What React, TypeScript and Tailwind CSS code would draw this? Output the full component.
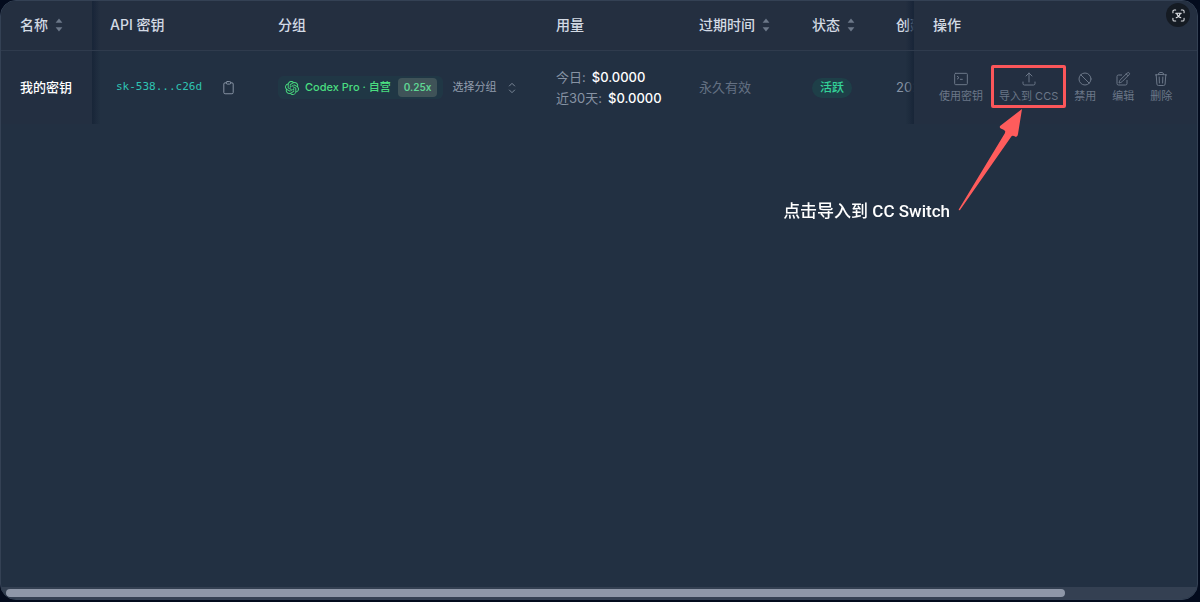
import type { ReactNode } from "react";

const COLUMNS = [
  { label: "名称", width: "w-[91px]", sortable: true },
  { label: "API 密钥", width: "w-[168px]" },
  { label: "分组", width: "w-[278px]" },
  { label: "用量", width: "w-[143px]" },
  { label: "过期时间", width: "w-[113px]", sortable: true },
  { label: "状态", width: "w-[84px]", sortable: true },
  { label: "创建", width: "w-[175px]" },
  { label: "操作", width: "w-[283px]" },
];

function SortIcon() {
  return (
    <svg viewBox="0 0 8 14" className="h-[14px] w-2 fill-[#6c7889]" aria-hidden="true">
      <path d="M4 0.5 7.4 4.8H0.6Z" />
      <path d="M4 13.5 7.4 9.2H0.6Z" />
    </svg>
  );
}

function StrokeIcon({ children, className }: { children: ReactNode; className: string }) {
  return (
    <svg
      viewBox="0 0 24 24"
      fill="none"
      stroke="currentColor"
      strokeWidth="1.5"
      strokeLinecap="round"
      strokeLinejoin="round"
      className={className}
      aria-hidden="true"
    >
      {children}
    </svg>
  );
}

function OpenAIIcon() {
  return (
    <svg viewBox="0 0 24 24" className="size-[14px] shrink-0 fill-current" aria-hidden="true">
      <path d="M22.2819 9.8211a5.9847 5.9847 0 0 0-.5157-4.9108 6.0462 6.0462 0 0 0-6.5098-2.9A6.0651 6.0651 0 0 0 4.9807 4.1818a5.9847 5.9847 0 0 0-3.9977 2.9 6.0462 6.0462 0 0 0 .7427 7.0966 5.98 5.98 0 0 0 .511 4.9107 6.051 6.051 0 0 0 6.5146 2.9001A5.9847 5.9847 0 0 0 13.2599 24a6.0557 6.0557 0 0 0 5.7718-4.2058 5.9894 5.9894 0 0 0 3.9977-2.9001 6.0557 6.0557 0 0 0-.7475-7.073zm-9.022 12.6081a4.4755 4.4755 0 0 1-2.8764-1.0408l.1419-.0804 4.7783-2.7582a.7948.7948 0 0 0 .3927-.6813v-6.7369l2.02 1.1686a.071.071 0 0 1 .038.052v5.5826a4.504 4.504 0 0 1-4.4945 4.4944zm-9.6607-4.1254a4.4708 4.4708 0 0 1-.5346-3.0137l.142.0852 4.783 2.7582a.7712.7712 0 0 0 .7806 0l5.8428-3.3685v2.3324a.0804.0804 0 0 1-.0332.0615L9.74 19.9502a4.4992 4.4992 0 0 1-6.1408-1.6464zM2.3408 7.8956a4.485 4.485 0 0 1 2.3655-1.9728V11.6a.7664.7664 0 0 0 .3879.6765l5.8144 3.3543-2.0201 1.1685a.0757.0757 0 0 1-.071 0l-4.8303-2.7865A4.504 4.504 0 0 1 2.3408 7.872zm16.5963 3.8558L13.1038 8.364 15.1192 7.2a.0757.0757 0 0 1 .071 0l4.8303 2.7913a4.4944 4.4944 0 0 1-.6765 8.1042v-5.6772a.79.79 0 0 0-.407-.667zm2.0107-3.0231l-.142-.0852-4.7735-2.7818a.7759.7759 0 0 0-.7854 0L9.409 9.2297V6.8974a.0662.0662 0 0 1 .0284-.0615l4.8303-2.7866a4.4992 4.4992 0 0 1 6.6802 4.66zM8.3065 12.863l-2.02-1.1638a.0804.0804 0 0 1-.038-.0567V6.0742a4.4992 4.4992 0 0 1 7.3757-3.4537l-.142.0805L8.704 5.459a.7948.7948 0 0 0-.3927.6813zm1.0976-2.3654l2.602-1.4998 2.6069 1.4998v2.9994l-2.5974 1.4997-2.6067-1.4997Z" />
    </svg>
  );
}

function ActionButton({ label, marked, children }: { label: string; marked?: boolean; children: ReactNode }) {
  return (
    <button type="button" className="relative flex flex-col items-center gap-px px-[6px] whitespace-nowrap text-[#6b7788]">
      <StrokeIcon className="size-4">{children}</StrokeIcon>
      <span className="text-[11px] leading-4">{label}</span>
      {marked && <span className="absolute -inset-x-[2px] -top-[6px] -bottom-1 rounded-[2px] border-[3px] border-[#fb565a]" />}
    </button>
  );
}

function ColumnShade({ side }: { side: "left" | "right" }) {
  return side === "left" ? (
    <span className="pointer-events-none absolute inset-y-0 left-full w-2 bg-linear-to-r from-[#182538] to-transparent" />
  ) : (
    <span className="pointer-events-none absolute inset-y-0 right-full w-2 bg-linear-to-l from-[#182538] to-transparent" />
  );
}

function headerCellClass(i: number) {
  if (i === 0) return "sticky left-0 z-10 bg-[#242f40] pl-[19px]";
  if (i === COLUMNS.length - 1) return "sticky right-0 z-10 bg-[#242f40] pl-[19px]";
  return "px-[18px]";
}

function KeysTable() {
  return (
    <table className="w-full min-w-[1335px] table-fixed border-separate border-spacing-0 text-left text-[13px]">
      <thead>
        <tr className="h-[50px] bg-[#242f40]">
          {COLUMNS.map((col, i) => (
            <th
              key={col.label}
              className={`border-b border-[#2f3b4d] pb-[2px] text-sm font-medium whitespace-nowrap text-[#d3dae4] ${col.width} ${headerCellClass(i)}`}
            >
              <span className="flex items-center gap-[7px]">
                {col.label}
                {col.sortable && <SortIcon />}
              </span>
              {i === 0 && <ColumnShade side="left" />}
              {i === COLUMNS.length - 1 && <ColumnShade side="right" />}
            </th>
          ))}
        </tr>
      </thead>
      <tbody>
        <tr className="h-[73px]">
          <td className="sticky left-0 z-10 bg-[#232f41] pl-[19px] font-medium whitespace-nowrap text-white">
            我的密钥
            <ColumnShade side="left" />
          </td>
          <td className="px-[18px]">
            <div className="flex items-center gap-[19px] pl-[6px]">
              <code className="font-['DejaVu_Sans_Mono',monospace] text-[11px] text-[#2fc4b2]">sk-538...c26d</code>
              <button type="button" aria-label="复制" className="text-[#8c98a9]">
                <StrokeIcon className="size-[15px]">
                  <path d="M8.5 4.5H6.5A2 2 0 0 0 4.5 6.5V20A2 2 0 0 0 6.5 22H17.5A2 2 0 0 0 19.5 20V6.5A2 2 0 0 0 17.5 4.5H15.5" />
                  <path d="M10 2.5H14A1.5 1.5 0 0 1 15.5 4V5A1.5 1.5 0 0 1 14 6.5H10A1.5 1.5 0 0 1 8.5 5V4A1.5 1.5 0 0 1 10 2.5Z" />
                </StrokeIcon>
              </button>
            </div>
          </td>
          <td className="px-[18px]">
            <button type="button" className="flex items-center gap-[9px] whitespace-nowrap">
              <span className="flex h-[23px] items-center gap-[6px] rounded-md bg-emerald-500/5 pr-[6px] pl-[7px] text-[11px] font-medium text-[#4ade80]">
                <OpenAIIcon />
                <span className="pr-px">Codex Pro · 自营</span>
                <span className="rounded bg-[#3f5358] px-[6px] text-[10px] leading-[19px] font-semibold text-[#5fd694]">0.25x</span>
              </span>
              <span className="text-[11px] text-[#939eae]">选择分组</span>
              <StrokeIcon className="size-[14px] text-[#8793a4]">
                <path d="M7.5 8.5 12 4l4.5 4.5" />
                <path d="M7.5 15.5 12 20l4.5-4.5" />
              </StrokeIcon>
            </button>
          </td>
          <td className="px-[18px] leading-[21px] whitespace-nowrap">
            <div className="flex gap-[6px]">
              <span className="text-[#8793a4]">今日:</span>
              <span className="font-medium text-white">$0.0000</span>
            </div>
            <div className="flex gap-[6px]">
              <span className="text-[#8793a4]">近30天:</span>
              <span className="font-medium text-white">$0.0000</span>
            </div>
          </td>
          <td className="px-[18px] whitespace-nowrap text-[#647183]">永久有效</td>
          <td className="px-[18px]">
            <span className="inline-block rounded-full bg-[#1e3f48] px-2 text-xs leading-5 font-medium whitespace-nowrap text-[#34d399]">活跃</span>
          </td>
          <td className="px-[18px] whitespace-nowrap text-[#8793a4]">2026</td>
          <td className="sticky right-0 z-10 bg-[#232f41] pl-[19px]">
            <ColumnShade side="right" />
            <div className="flex items-center gap-1">
              <ActionButton label="使用密钥">
                <rect x="2.5" y="3.5" width="19" height="17" rx="1.5" />
                <path d="m6.5 8 2.5 2-2.5 2M11 12.5h3" />
              </ActionButton>
              <ActionButton label="导入到 CCS" marked>
                <path d="M3 16.5v2.25A2.25 2.25 0 0 0 5.25 21h13.5A2.25 2.25 0 0 0 21 18.75V16.5M16.5 7.5 12 3 7.5 7.5M12 3v13.5" />
              </ActionButton>
              <ActionButton label="禁用">
                <circle cx="12" cy="12" r="9" />
                <path d="m5.64 5.64 12.72 12.72" />
              </ActionButton>
              <ActionButton label="编辑">
                <path d="m16.862 4.487 1.687-1.688a1.875 1.875 0 1 1 2.652 2.652L10.582 16.07a4.5 4.5 0 0 1-1.897 1.13L6 18l.8-2.685a4.5 4.5 0 0 1 1.13-1.897l8.932-8.931ZM18 14v4.75A2.25 2.25 0 0 1 15.75 21H5.25A2.25 2.25 0 0 1 3 18.75V8.25A2.25 2.25 0 0 1 5.25 6H10" />
                <path d="m16.862 4.487 2.638 2.638" />
              </ActionButton>
              <ActionButton label="删除">
                <path d="m14.74 9-.346 9m-4.788 0L9.26 9m9.968-3.21c.342.052.682.107 1.022.166m-1.022-.165L18.16 19.673a2.25 2.25 0 0 1-2.244 2.077H8.084a2.25 2.25 0 0 1-2.244-2.077L4.772 5.79m14.456 0a48.108 48.108 0 0 0-3.478-.397m-12 .562c.34-.059.68-.114 1.022-.165m0 0a48.11 48.11 0 0 1 3.478-.397m7.5 0v-.916c0-1.18-.91-2.164-2.09-2.201a51.964 51.964 0 0 0-3.32 0c-1.18.037-2.09 1.022-2.09 2.201v.916m7.5 0a48.667 48.667 0 0 0-7.5 0" />
              </ActionButton>
            </div>
          </td>
        </tr>
      </tbody>
    </table>
  );
}

export default function App() {
  return (
    <div className="flex min-h-screen flex-col bg-[#030b1d] pr-[2px] pb-[2px] font-[Inter,'Noto_Sans_CJK_SC',sans-serif]">
      <main className="relative flex flex-1 flex-col overflow-hidden rounded-2xl border border-[#344154] bg-[#223042]">
        <div className="flex-1 overflow-x-auto [scrollbar-width:none]">
          <KeysTable />
        </div>

        {/* horizontal scroll indicator */}
        <div className="flex h-3 items-center bg-[#344052] px-[5px]">
          <div className="h-2 w-25/28 rounded-full bg-[#8e97a8]" />
        </div>

        <button
          type="button"
          aria-label="识别"
          className="absolute top-[2px] right-[7px] z-20 flex size-6 items-center justify-center rounded-full bg-[#151b23] text-[#e5e7eb]"
        >
          <svg viewBox="0 0 14 14" fill="none" stroke="currentColor" strokeWidth="1.1" strokeLinecap="round" className="size-[13px]" aria-hidden="true">
            <path d="M1 4V2.5A1.5 1.5 0 0 1 2.5 1H4M10 1h1.5A1.5 1.5 0 0 1 13 2.5V4M13 10v1.5a1.5 1.5 0 0 1-1.5 1.5H10M4 13H2.5A1.5 1.5 0 0 1 1 11.5V10" />
            <path d="M4 4.5h6M5 4.5c.5 2.2 2 4 4.5 5M9 4.5c-.5 2.2-2 4-4.5 5" />
          </svg>
        </button>

        {/* callout pointing at the import action */}
        <div className="pointer-events-none absolute top-[107px] right-[173px] z-20 flex items-end gap-2">
          <span className="font-[Roboto,'Noto_Sans_CJK_SC',sans-serif] text-[17px] leading-[22px] font-medium whitespace-nowrap text-white">
            点击导入到 CC Switch
          </span>
          <svg viewBox="0 0 66 114" className="h-[114px] w-[66px]" aria-hidden="true">
            <path
              d="M64 1 42 18Q41 20 44 21L46 22Q48 23 47 25L1 101Q0 103 2 102L53 29Q54 27 56 28L58 29Q60 28 60 26Z"
              fill="#ff5c5c"
            />
          </svg>
        </div>
      </main>
    </div>
  );
}
